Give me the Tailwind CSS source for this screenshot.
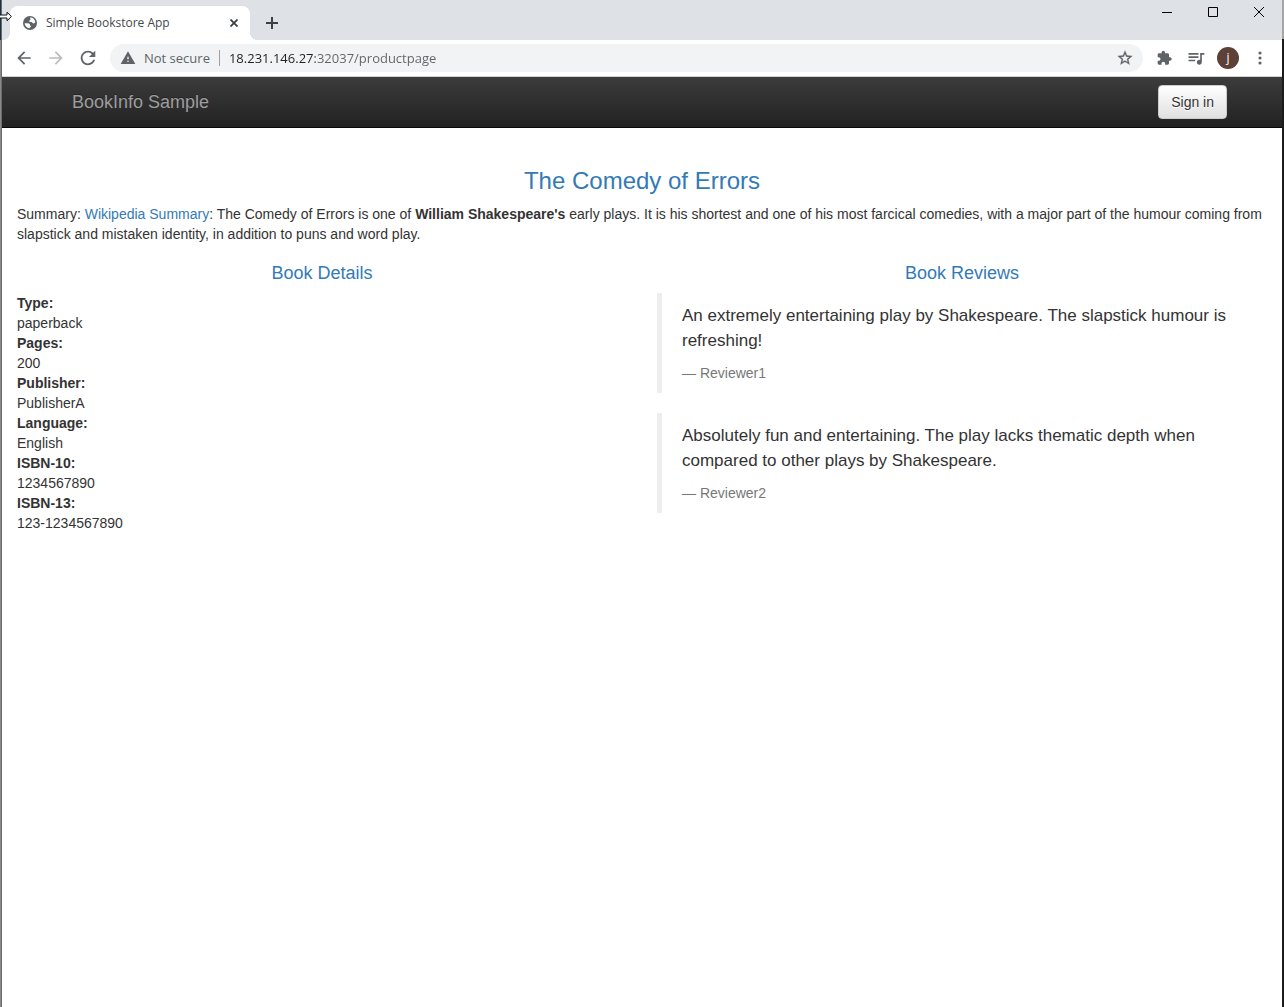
<!DOCTYPE html>
<html lang="en">
<head>
<meta charset="utf-8">
<meta name="viewport" content="width=device-width, initial-scale=1">
<title>Simple Bookstore App</title>
<script src="https://cdn.jsdelivr.net/npm/@tailwindcss/browser@4"></script>
</head>
<body class="flex min-h-screen bg-white font-['Liberation_Sans',Arial,sans-serif] text-sm leading-5 text-[#333333]">
  <!-- desktop showing at the left of the window -->
  <div class="w-0.5 shrink-0 border-r border-[#6b6b6b] bg-[linear-gradient(#16304a_40px,#8a8a8a_40px)]"></div>

  <div class="min-w-0 flex-1">
    <!-- tab strip -->
    <header>
      <div class="flex h-10 items-end bg-[#dee1e6]">
        <div class="relative ml-2 flex h-[34px] w-60 items-center rounded-t-lg bg-white pr-2 pl-[13px]">
          <span class="absolute bottom-0 -left-2 size-2 bg-[radial-gradient(circle_at_0_0,#dee1e6_8px,#ffffff_8px)]"></span>
          <span class="absolute -right-2 bottom-0 size-2 bg-[radial-gradient(circle_at_100%_0,#dee1e6_8px,#ffffff_8px)]"></span>
          <svg class="size-[14px] shrink-0" viewBox="0 0 14 14" aria-hidden="true"><circle cx="7" cy="7" r="7" fill="#5f6368"/><path d="M7.200 1.600C9.800 1.500 12 3.500 12.300 6.300c-.5.900-1.300 1.300-2.100 1.100C9.300 7.200 9.500 6.300 8.600 6.100 7.600 5.900 6.400 6.200 6.200 5.200 6 4.200 7.400 4.300 7.500 3.400 7.600 2.700 6.700 2.300 7.200 1.600zM1.600 7.300h3.200c1.500 0 2.300.8 2.300 1.900 0 .5.800.5.800 1.200 0 .9-1.400.7-1.500 1.900C3.700 12 1.800 9.900 1.600 7.300z" fill="#fff"/></svg>
          <span class="ml-[9px] flex-1 font-['Open_Sans',sans-serif] text-xs whitespace-nowrap text-[#45494d]">Simple Bookstore App</span>
          <button type="button" aria-label="Close tab" class="grid size-4 place-items-center">
            <svg class="size-2 stroke-[#3c4043]" viewBox="0 0 8 8" fill="none" stroke-width="1.8"><path d="M.5.5l7 7M7.500.5l-7 7"/></svg>
          </button>
        </div>
        <button type="button" aria-label="New tab" class="ml-3 grid h-[34px] w-5 place-items-center">
          <svg class="size-3 stroke-[#3c4043]" viewBox="0 0 12 12" stroke-width="2"><path d="M6 0v12M0 6h12"/></svg>
        </button>
        <div class="ml-auto flex self-start">
          <button type="button" aria-label="Minimize" class="grid h-6 w-[46px] place-items-center">
            <svg class="size-[10px] stroke-black" viewBox="0 0 10 10"><path d="M0 5.500h10"/></svg>
          </button>
          <button type="button" aria-label="Maximize" class="grid h-6 w-[46px] place-items-center">
            <svg class="size-[10px] stroke-black" viewBox="0 0 10 10" fill="none"><path d="M.5.5h9v9h-9z"/></svg>
          </button>
          <button type="button" aria-label="Close" class="grid h-6 w-[46px] place-items-center">
            <svg class="size-[10px] stroke-black" viewBox="0 0 10 10" fill="none"><path d="M0 0l10 10M10 0L0 10"/></svg>
          </button>
        </div>
      </div>

      <!-- toolbar -->
      <div class="flex h-[37px] items-center border-b border-[#d0d2d5] bg-white pr-3 pl-3 font-['Open_Sans',sans-serif]">
        <div class="flex gap-3">
          <button type="button" aria-label="Back"><svg class="size-5 fill-[#5f6368]" viewBox="0 0 24 24"><path d="M20 11H7.830l5.590-5.590L12 4l-8 8 8 8 1.410-1.410L7.830 13H20v-2z"/></svg></button>
          <button type="button" aria-label="Forward"><svg class="size-5 fill-[#babcbe]" viewBox="0 0 24 24"><path d="M12 4l-1.410 1.410L16.170 11H4v2h12.170l-5.580 5.590L12 20l8-8z"/></svg></button>
          <button type="button" aria-label="Reload"><svg class="size-5 fill-[#5f6368]" viewBox="1 1 22 22"><path d="M17.650 6.350C16.200 4.900 14.210 4 12 4c-4.420 0-7.990 3.580-7.990 8s3.570 8 7.990 8c3.730 0 6.840-2.550 7.730-6h-2.080c-.82 2.330-3.040 4-5.650 4-3.310 0-6-2.690-6-6s2.690-6 6-6c1.660 0 3.140.69 4.220 1.780L13 11h7V4l-2.350 2.350z"/></svg></button>
        </div>
        <div class="mr-3 ml-3 flex h-7 min-w-0 flex-1 items-center rounded-full bg-[#f1f3f4] pr-[10px] pl-[10px] text-[13px]">
          <svg class="size-4 shrink-0 fill-[#5f6368]" viewBox="0 0 24 24" aria-hidden="true"><path d="M1 21h22L12 2 1 21zm12-3h-2v-2h2v2zm0-4h-2v-4h2v4z"/></svg>
          <label for="url" class="ml-2 whitespace-nowrap text-[#5f6368]">Not secure</label>
          <span class="mr-[9px] ml-[9px] h-4 w-px bg-[#9aa0a6]"></span>
          <input id="url" type="text" value="18.231.146.27:32037/productpage" class="min-w-0 flex-1 bg-[linear-gradient(to_right,#202124_86px,#5f6368_86px)] bg-clip-text text-transparent outline-none">
          <button type="button" aria-label="Bookmark this page"><svg class="size-4 fill-[#5f6368] stroke-[#5f6368]" stroke-width=".4" viewBox="1 1 22 22"><path d="M22 9.240l-7.190-.62L12 2 9.190 8.630 2 9.240l5.460 4.730L5.820 21 12 17.270 18.180 21l-1.630-7.030L22 9.240zM12 15.400l-3.760 2.270 1-4.280-3.320-2.880 4.380-.38L12 6.100l1.710 4.040 4.380.38-3.320 2.880 1 4.280L12 15.400z"/></svg></button>
        </div>
        <div class="flex items-center gap-[11px]">
          <button type="button" aria-label="Extensions" class="grid size-5 place-items-center"><svg class="size-4 fill-[#5f6368]" viewBox="1 0 24 24"><path d="M20.500 11H19V7c0-1.100-.9-2-2-2h-4V3.500C13 2.120 11.880 1 10.500 1S8 2.120 8 3.500V5H4c-1.100 0-1.990.9-1.990 2v3.800H3.500c1.490 0 2.700 1.210 2.700 2.700s-1.210 2.700-2.700 2.700H2V20c0 1.100.9 2 2 2h3.800v-1.500c0-1.490 1.210-2.700 2.700-2.700 1.490 0 2.700 1.210 2.700 2.700V22H17c1.100 0 2-.9 2-2v-4h1.500c1.380 0 2.500-1.120 2.500-2.500S21.880 11 20.500 11z"/></svg></button>
          <button type="button" aria-label="Media controls"><svg class="size-5 fill-[#5f6368]" viewBox="0 0 24 24"><path d="M15 6H3v2h12V6zm0 4H3v2h12v-2zM3 16h8v-2H3v2zM17 6v8.180c-.31-.11-.65-.18-1-.18-1.660 0-3 1.340-3 3s1.340 3 3 3 3-1.340 3-3V8h3V6h-5z"/></svg></button>
          <button type="button" aria-label="Profile" class="size-[22px] rounded-full bg-[#5d4037] text-center text-xs leading-5 text-white">j</button>
          <button type="button" aria-label="Menu"><svg class="size-5 fill-[#5f6368]" viewBox="0 0 24 24"><circle cx="12" cy="6" r="1.900"/><circle cx="12" cy="12" r="1.900"/><circle cx="12" cy="18" r="1.900"/></svg></button>
        </div>
      </div>
    </header>

    <!-- site navigation -->
    <nav class="border-b border-[#080808] bg-linear-to-b from-[#3c3c3c] to-[#222222]">
      <div class="mx-auto flex h-[50px] max-w-[1170px] items-center justify-between pl-[15px]">
        <a href="#" class="text-lg leading-5 text-[#9d9d9d] text-shadow-[0_-1px_0_rgba(0,0,0,0.25)]">BookInfo Sample</a>
        <button type="button" class="rounded border border-[#cccccc] bg-linear-to-b from-white to-[#e0e0e0] px-3 py-1.5 text-shadow-[0_1px_0_#ffffff]">Sign in</button>
      </div>
    </nav>

    <main class="px-[15px] pt-10">
      <h3 class="text-center text-2xl leading-[26px] text-[#337ab7]">The Comedy of Errors</h3>
      <p class="mt-[10px]">Summary: <a href="#" class="text-[#337ab7]">Wikipedia Summary</a>: The Comedy of Errors is one of <b>William Shakespeare's</b> early plays. It is his shortest and one of his most farcical comedies, with a major part of the humour coming from slapstick and mistaken identity, in addition to puns and word play.</p>

      <div class="mt-[19px] grid grid-cols-2 gap-[30px]">
        <section>
          <h4 class="text-center text-lg leading-5 text-[#337ab7]">Book Details</h4>
          <dl class="mt-[10px]">
            <dt class="font-bold">Type:</dt><dd>paperback</dd>
            <dt class="font-bold">Pages:</dt><dd>200</dd>
            <dt class="font-bold">Publisher:</dt><dd>PublisherA</dd>
            <dt class="font-bold">Language:</dt><dd>English</dd>
            <dt class="font-bold">ISBN-10:</dt><dd>1234567890</dd>
            <dt class="font-bold">ISBN-13:</dt><dd>123-1234567890</dd>
          </dl>
        </section>
        <section>
          <h4 class="text-center text-lg leading-5 text-[#337ab7]">Book Reviews</h4>
          <blockquote class="mt-[10px] border-l-[5px] border-[#eeeeee] px-5 py-[10px] text-[17px] leading-[25px]">
            <p>An extremely entertaining play by Shakespeare. The slapstick humour is refreshing!</p>
            <footer class="mt-[10px] text-sm leading-5 text-[#777777]">— Reviewer1</footer>
          </blockquote>
          <blockquote class="mt-5 border-l-[5px] border-[#eeeeee] px-5 py-[10px] text-[17px] leading-[25px]">
            <p>Absolutely fun and entertaining. The play lacks thematic depth when compared to other plays by Shakespeare.</p>
            <footer class="mt-[10px] text-sm leading-5 text-[#777777]">— Reviewer2</footer>
          </blockquote>
        </section>
      </div>
    </main>
  </div>

  <!-- desktop showing at the right of the window -->
  <div class="w-0.5 shrink-0 bg-[linear-gradient(#a5a5a5_39px,#1b1b1b_39px)]"></div>

  <!-- resize pointer -->
  <svg class="absolute top-[11px] left-0 h-[11px] w-3" viewBox="0 0 12 11" aria-hidden="true"><path d="M-1 4h8V1.200l4.400 4.300L7 9.800V7h-8z" fill="#fff" stroke="#111" stroke-width="1"/></svg>
</body>
</html>
